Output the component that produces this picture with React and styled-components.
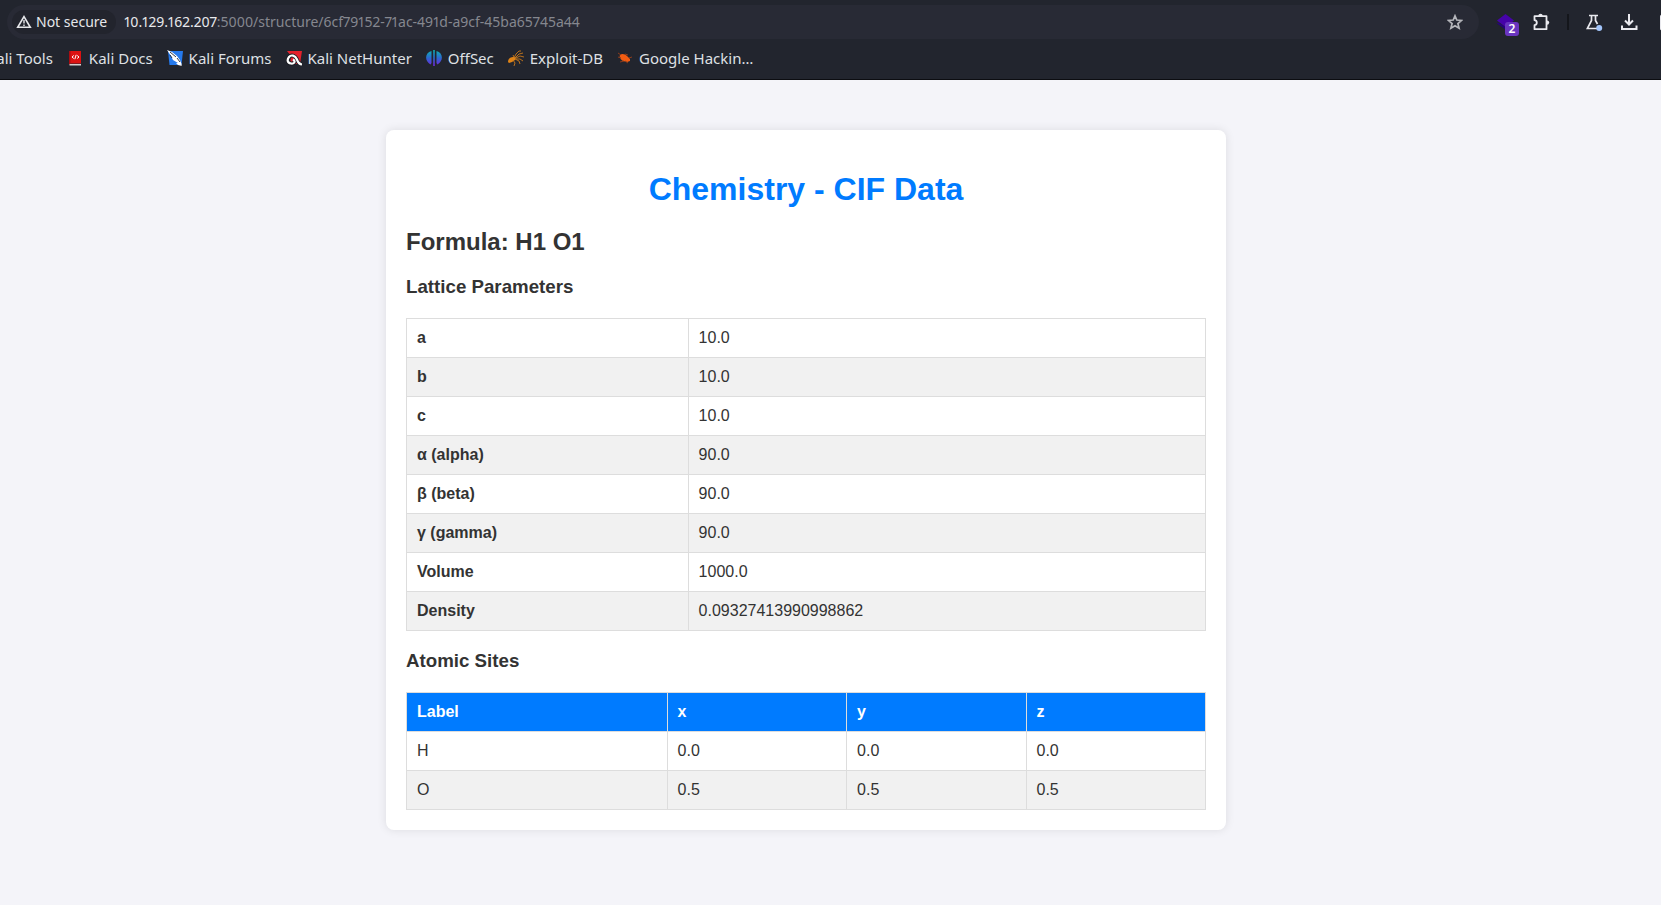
import React from "react";
import styled, { createGlobalStyle } from "styled-components";

const GlobalStyle = createGlobalStyle`
  html, body { margin: 0; background: #f4f4f9; overflow-x: hidden; }
`;

const ui = `"Noto Sans", "Open Sans", sans-serif`;

/* The window hangs past the left edge of the screen. */
const Window = styled.div`
  margin-left: -49px;
`;

const Chrome = styled.header`
  background: #22252e;
  border-bottom: 1px solid #0c0d11;
  font-family: ${ui};
`;

const Toolbar = styled.div`
  display: flex;
  align-items: center;
  height: 44px;
  padding-left: 56px;
`;

const AddressBar = styled.div`
  flex: 1;
  display: flex;
  align-items: center;
  box-sizing: border-box;
  height: 34px;
  padding: 0 16px 0 5px;
  border-radius: 17px;
  background: #282a35;
`;

const SecurityChip = styled.button`
  display: flex;
  align-items: center;
  gap: 4px;
  height: 24px;
  padding: 0 9px 0 4px;
  border: 0;
  border-radius: 12px;
  background: #22242d;
  color: #e6e7ea;
  font: 14px/24px ${ui};
`;

const Address = styled.div`
  flex: 1;
  margin-left: 8px;
  font-size: 14px;
  line-height: 24px;
  font-variant-numeric: proportional-nums;
  color: #85878f;
  white-space: nowrap;
`;

const Host = styled.span`
  color: #e8e9ec;
`;

const IconButton = styled.button`
  display: flex;
  flex: none;
  align-items: center;
  padding: 0;
  border: 0;
  background: none;
  color: ${(p) => p.$tone || "#e9e9ee"};
`;

const Actions = styled.div`
  display: flex;
  flex: none;
  align-items: center;
  width: 182px;
  height: 34px;
  box-sizing: border-box;
  padding-left: 18px;
  gap: 17px;
  overflow: hidden;
`;

const Extension = styled(IconButton)`
  position: relative;
  width: 22px;
  height: 24px;
  margin-right: -4px;
`;

const Badge = styled.span`
  position: absolute;
  right: 0;
  bottom: -2px;
  width: 14px;
  height: 14px;
  border-radius: 3px;
  background: #6a35c0;
  color: #fff;
  font: 600 12px/14px ${ui};
  text-align: center;
`;

const Divider = styled.span`
  flex: none;
  width: 2px;
  height: 16px;
  background: #14161b;
`;

const Bookmarks = styled.nav`
  display: flex;
  align-items: center;
  gap: 14px;
  height: 35px;
  padding: 0 0 7px 14px;
  box-sizing: border-box;
`;

const Bookmark = styled.a`
  display: flex;
  flex: none;
  align-items: center;
  gap: 6px;
  color: #dfe0e4;
  font-size: 15px;
  line-height: 20px;
  text-decoration: none;
  white-space: nowrap;
`;

const Page = styled.main`
  padding: 50px 20px;
  font-family: Arial, "Liberation Sans", sans-serif;
  font-size: 16px;
  color: #333;
`;

const Card = styled.article`
  display: flow-root;
  max-width: 800px;
  margin: 0 auto;
  padding: 20px;
  border-radius: 8px;
  background: #fff;
  box-shadow: 0 0 10px rgba(0, 0, 0, 0.1);
`;

const Title = styled.h1`
  margin: 21px 0 0;
  color: #007bff;
  font-size: 32px;
  line-height: 36px;
  text-align: center;
`;

const Formula = styled.h2`
  margin: 20px 0;
  font-size: 24px;
  line-height: 29px;
`;

const DataTable = styled.table`
  width: 100%;
  margin-top: 20px;
  border-collapse: collapse;

  tbody tr:nth-child(even) {
    background: #f1f1f1;
  }
`;

const Cell = styled.td`
  padding: 10px;
  border: 1px solid #ddd;
  text-align: left;
`;

const HeadCell = styled(Cell)`
  background: #007bff;
  color: #fff;
`;

const Svg = ({ size = 16, children, ...rest }) => (
  <svg width={size} height={size} viewBox="0 0 16 16" fill="none" aria-hidden="true" {...rest}>
    {children}
  </svg>
);

const WarningIcon = () => (
  <Svg>
    <path d="M8 2.6 14.3 13.3H1.7Z" stroke="currentColor" strokeWidth="1.6" />
    <path d="M8 6v3.6M8 10.4v1.6" stroke="currentColor" strokeWidth="1.4" />
  </Svg>
);

const StarIcon = () => (
  <Svg>
    <path d="M8 1.800 9.800 6l4.800.4-3.700 3.100 1.200 4.700-4.100-2.500-4.100 2.500 1.200-4.700L1.400 6.400 6.200 6Z" stroke="currentColor" strokeWidth="1.7" />
  </Svg>
);

const LayersIcon = () => (
  <svg width="17" height="16" viewBox="0 0 17 16" aria-hidden="true">
    <path d="M0 9.500 1 8.500 9 13v3Z" fill="#25037a" />
    <path d="M8.500 0 17 6.500 8.500 13 0 6.500Z" fill="#4603a9" />
  </svg>
);

const PuzzleIcon = () => (
  <Svg size={18} viewBox="0 0 18 18">
    <path d="M2.500 3.200H14.500V16.200H2.500V12.200C4 12 4.800 11 4.800 9.700S4 7.400 2.500 7.200Z" stroke="currentColor" strokeWidth="1.8" strokeLinejoin="round" />
    <path d="M6.300 3a2.200 2.200 0 0 1 4.400 0Z" fill="currentColor" />
    <path d="M15 7.400a2.200 2.200 0 0 1 0 4.400Z" fill="currentColor" />
  </Svg>
);

const FlaskIcon = () => (
  <svg width="17" height="18" viewBox="0 0 17 18" fill="none" aria-hidden="true">
    <path d="M3 2.500H12M5.500 3V7.500L1.300 15.500H11M9.500 3V7.500L11.500 11" stroke="currentColor" strokeWidth="1.700" />
    <circle cx="13.200" cy="15" r="3" fill="#a3c5fb" />
  </svg>
);

const DownloadIcon = () => (
  <Svg size={18} viewBox="0 0 18 18">
    <path d="M9 1V11M5 7.500l4 4 4-4M2 12.500V16H16.500V12.500" stroke="currentColor" strokeWidth="2" />
  </Svg>
);

const PanelIcon = () => (
  <svg width="22" height="19" viewBox="0 0 22 19" fill="none" aria-hidden="true">
    <rect x="6" y="2.500" width="15" height="14" rx="1" stroke="currentColor" strokeWidth="2" />
  </svg>
);

const ToolsIcon = () => (
  <Svg>
    <path d="M2 3h12v10H2Z" fill="#2777e8" />
  </Svg>
);

const DocsIcon = () => (
  <Svg>
    <path d="M2 1H14V13.500H3.500L2 14.500Z" fill="#dc1212" />
    <path d="M2 1H3.500V13L2 14.500Z" fill="#a90d12" />
    <path d="M2.500 14H14V15.500H2.500Z" fill="#d3cfd0" />
    <path d="M6.800 5.500 5 7l1.800 1.500M10.200 5.500 12 7l-1.800 1.500M9.200 4.800 7.800 9.200" stroke="#fff" strokeWidth="1" />
  </Svg>
);

const ForumsIcon = () => (
  <Svg>
    <path d="M1 1H16L14.500 15H2.500Z" fill="#2579ec" />
    <path d="M0 0 5 2 10 6l3 4 2 5-4-2-5-3-2-4Z" fill="#fff" />
    <path d="m3 2 6 5M3 5l2 3M10 8l3 4" stroke="#1c2432" strokeWidth=".9" />
    <path d="M9 13l2 2 4 1-2-3Z" fill="#fff" />
  </Svg>
);

const NetHunterIcon = () => (
  <Svg>
    <path d="M1 1H16L14 14H4L5 6Z" fill="#e4212c" />
    <path d="M16 14C12 14 12 12 11 9.500 9 5 5 4.500 3 7S1 13 5 13.500 9 11 8 9.500" stroke="#1b1d24" strokeWidth="4" />
    <path d="M16 14.500C12 14 12 12 11 9.500 9 5 5 4.500 3 7S1 13 5 13.500 9.500 11 7 9.500" stroke="#fff" strokeWidth="2.200" />
  </Svg>
);

const OffSecIcon = () => (
  <Svg>
    <defs>
      <linearGradient id="offsec" gradientUnits="userSpaceOnUse" x1="0" y1="0" x2="0" y2="16">
        <stop stopColor="#0cb4b0" />
        <stop offset="0.5" stopColor="#2b68cf" />
        <stop offset="1" stopColor="#7424de" />
      </linearGradient>
    </defs>
    <path d="M5.500 1C-1.500 3-1.500 11 4.500 14.500L5.500 13ZM10.500 1C17.500 3 17.500 11 11.500 14.500L10.500 13ZM7.200 0H8.800V16H7.200Z" fill="url(#offsec)" />
  </Svg>
);

const ExploitIcon = () => (
  <Svg>
    <path d="M0 12C0 8 3 7 6 7l2 1-1 2-3 2-3 1Z" fill="#df8316" />
    <path d="M6 8 8 4l3-3 2 0M7 8l4-4 4-1M8 8l4-2 4 1M8 9l4 0 3 2M7 9l4 2 1 3M5 10l2 3-1 3M6 7 5 5" stroke="#c8781c" strokeWidth=".9" />
  </Svg>
);

const HackingIcon = () => (
  <Svg>
    <path d="M3 5C5 3 8 4 10 6l3 3 0 2-3 1-4-1C4 10 2 7 3 5Z" fill="#f25c12" />
    <path d="M8 4 11 5M12 8l3-1M1 7l3 1M3 12l4-1M8 11l3 2M1 3l3 2" stroke="#8b3c1c" strokeWidth="1" />
  </Svg>
);

const bookmarks = [
  ["Kali Tools", ToolsIcon],
  ["Kali Docs", DocsIcon],
  ["Kali Forums", ForumsIcon],
  ["Kali NetHunter", NetHunterIcon],
  ["OffSec", OffSecIcon],
  ["Exploit-DB", ExploitIcon],
  ["Google Hackin…", HackingIcon],
];

const lattice = [
  ["a", "10.0"],
  ["b", "10.0"],
  ["c", "10.0"],
  ["α (alpha)", "90.0"],
  ["β (beta)", "90.0"],
  ["γ (gamma)", "90.0"],
  ["Volume", "1000.0"],
  ["Density", "0.09327413990998862"],
];

const sites = [
  ["H", "0.0", "0.0", "0.0"],
  ["O", "0.5", "0.5", "0.5"],
];

export default function App() {
  return (
    <Window>
      <GlobalStyle />
      <Chrome>
        <Toolbar>
          <AddressBar>
            <SecurityChip><WarningIcon />Not secure</SecurityChip>
            <Address>
              <Host>10.129.162.207</Host>:5000/structure/6cf79152-71ac-491d-a9cf-45ba65745a44
            </Address>
            <IconButton aria-label="Bookmark this page" $tone="#b4b5ba"><StarIcon /></IconButton>
          </AddressBar>
          <Actions>
            <Extension aria-label="Extension"><LayersIcon /><Badge>2</Badge></Extension>
            <IconButton aria-label="Extensions"><PuzzleIcon /></IconButton>
            <Divider />
            <IconButton aria-label="Labs"><FlaskIcon /></IconButton>
            <IconButton aria-label="Downloads"><DownloadIcon /></IconButton>
            <IconButton aria-label="Side panel"><PanelIcon /></IconButton>
          </Actions>
        </Toolbar>
        <Bookmarks aria-label="Bookmarks">
          {bookmarks.map(([name, Icon]) => (
            <Bookmark href="#" key={name}><Icon />{name}</Bookmark>
          ))}
        </Bookmarks>
      </Chrome>
      <Page>
        <Card>
          <Title>Chemistry - CIF Data</Title>
          <Formula>Formula: H1 O1</Formula>
          <h3>Lattice Parameters</h3>
          <DataTable>
            <tbody>
              {lattice.map(([name, value]) => (
                <tr key={name}>
                  <Cell as="th" scope="row">{name}</Cell>
                  <Cell>{value}</Cell>
                </tr>
              ))}
            </tbody>
          </DataTable>
          <h3>Atomic Sites</h3>
          <DataTable>
            <thead>
              <tr>
                {["Label", "x", "y", "z"].map((h) => (
                  <HeadCell as="th" scope="col" key={h}>{h}</HeadCell>
                ))}
              </tr>
            </thead>
            <tbody>
              {sites.map((row) => (
                <tr key={row[0]}>
                  {row.map((v, i) => <Cell key={i}>{v}</Cell>)}
                </tr>
              ))}
            </tbody>
          </DataTable>
        </Card>
      </Page>
    </Window>
  );
}
